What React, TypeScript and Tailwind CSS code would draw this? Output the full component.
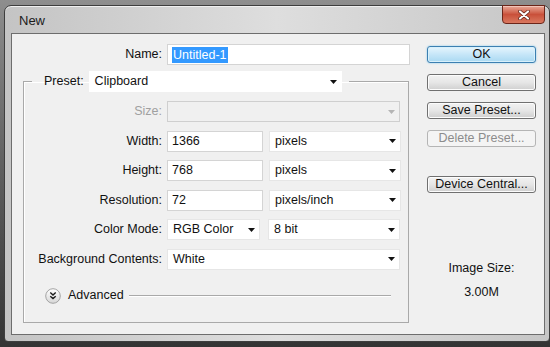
import type { ReactNode } from 'react';

const Arrow = ({ disabled }: { disabled?: boolean }) => (
  <svg width="7" height="4" viewBox="0 0 7 4" className="shrink-0">
    <path d="M0 0h7L3.5 4z" fill={disabled ? '#b4b4b4' : '#111'} />
  </svg>
);

function Select({ value, className, disabled }: { value?: string; className: string; disabled?: boolean }) {
  return (
    <div
      className={`h-[21px] flex items-center justify-between pl-[5px] pr-[4px] border ${
        disabled ? 'bg-[#f0f0f0] border-[#cfcfcf]' : 'bg-white border-[#e6e6e6]'
      } ${className}`}
    >
      <span>{value}</span>
      <Arrow disabled={disabled} />
    </div>
  );
}

function Input({ value, className }: { value: string; className: string }) {
  return (
    <div className={`h-[21px] flex items-center pl-[4px] bg-white border border-[#d4d4d4] ${className}`}>
      {value}
    </div>
  );
}

function Row({ label, children, muted }: { label: string; children: ReactNode; muted?: boolean }) {
  return (
    <div className="h-[21px] flex items-center gap-[5px]">
      <span className={`w-[138px] text-right ${muted ? 'text-[#a0a0a0]' : ''}`}>{label}</span>
      {children}
    </div>
  );
}

function Button({ children, variant }: { children: ReactNode; variant?: 'default' | 'disabled' }) {
  let cls =
    'border-[#707070] bg-gradient-to-b from-[#f2f2f2] via-[#e6e6e6] to-[#cfcfcf] text-[#111] shadow-[inset_0_0_0_1px_#fcfcfc]';
  if (variant === 'default')
    cls =
      'border-[#3c7fb1] bg-gradient-to-b from-[#e6f5fd] via-[#c6e6f8] to-[#a9d9f2] text-[#111] shadow-[inset_0_0_0_1px_#d8f0fb,0_0_2px_#7cc4ea]';
  if (variant === 'disabled') cls = 'border-[#b5b5b5] bg-[#f4f4f4] text-[#8c8c8c]';
  return (
    <div className={`h-[17px] w-[109px] rounded-[3px] border flex items-center justify-center leading-none ${cls}`}>
      {children}
    </div>
  );
}

export default function App() {
  return (
    <div className="w-[550px] h-[347px] overflow-hidden bg-gradient-to-b from-[#8e8e8e] via-[#5e5e5e] to-[#343434] pl-[4px] pt-[5px] font-['Liberation_Sans',Arial,sans-serif] text-[12.5px] text-[#111]">
      <div className="relative w-[546px] h-[337px] rounded-t-[7px] rounded-b-[4px] border border-[#3e3e3e] bg-gradient-to-r from-[#c4c4c4] via-[#dedede] to-[#c6c6c6] pl-[6px] pr-[4px] flex flex-col shadow-[inset_0_1px_0_#f0f0f0]">
        <div className="h-[27px] flex items-center pl-[8px] pt-[2px] text-[13px] text-[#1b1b1b]">New</div>

        <div className="absolute right-[4px] top-[-1px] w-[43px] h-[19px] rounded-b-[4px] border border-[#6b2519] bg-gradient-to-b from-[#e8a898] via-[#c9503a] to-[#d9785f] flex items-center justify-center shadow-[inset_0_1px_0_#f3c4b8]">
          <svg width="14" height="10" viewBox="0 0 14 10">
            <path d="M3 1.5l8 7M11 1.5l-8 7" stroke="#5a1f16" strokeWidth="3.6" strokeLinecap="round" />
            <path d="M3 1.5l8 7M11 1.5l-8 7" stroke="#fff" strokeWidth="2.2" strokeLinecap="round" />
          </svg>
        </div>

        <div className="w-[534px] h-[302px] border border-[#6d6d6d] bg-[#f0f0f0] pl-[11px] pt-[10px] flex gap-[17px]">
          <div className="w-[387px] flex flex-col">
            <div className="h-[21px] flex items-center gap-[5px]">
              <span className="w-[139px] text-right">Name:</span>
              <div className="w-[243px] h-[21px] flex items-center pl-[4px] bg-white border border-[#d4d4d4]">
                <span className="bg-[#3399ff] text-white leading-[16px] px-[1px]">Untitled-1</span>
              </div>
            </div>

            <fieldset className="mt-[6px] w-[386px] border border-[#a9a9a9] shadow-[inset_1px_1px_0_#fff] pb-[18px]">
              <legend className="ml-[8px]">
                <div className="flex items-center pl-[12px] pr-[7px] gap-[5px]">
                  <span>Preset:</span>
                  <Select value="Clipboard" className="w-[253px] border-white" />
                </div>
              </legend>

              <div className="pt-[9px] flex flex-col gap-[8.5px]">
                <Row label="Size:" muted>
                  <Select className="w-[233px]" disabled />
                </Row>
                <Row label="Width:">
                  <Input value="1366" className="w-[96px]" />
                  <Select value="pixels" className="w-[132px] ml-[1px]" />
                </Row>
                <Row label="Height:">
                  <Input value="768" className="w-[96px]" />
                  <Select value="pixels" className="w-[132px] ml-[1px]" />
                </Row>
                <Row label="Resolution:">
                  <Input value="72" className="w-[96px]" />
                  <Select value="pixels/inch" className="w-[132px] ml-[1px]" />
                </Row>
                <Row label="Color Mode:">
                  <Select value="RGB Color" className="w-[93px]" />
                  <Select value="8 bit" className="w-[132px] ml-[3px]" />
                </Row>
                <Row label="Background Contents:">
                  <Select value="White" className="w-[233px]" />
                </Row>
              </div>

              <div className="mt-[18px] h-[16px] flex items-center pl-[21px] pr-[17px]">
                <svg width="16" height="16" viewBox="0 0 16 16" className="shrink-0">
                  <defs>
                    <linearGradient id="adv" x1="0" y1="0" x2="0" y2="1">
                      <stop offset="0" stopColor="#ffffff" />
                      <stop offset="1" stopColor="#d6d6d6" />
                    </linearGradient>
                  </defs>
                  <circle cx="8" cy="8" r="7.3" fill="url(#adv)" stroke="#a3a3a3" />
                  <path d="M5.3 4.6L8 7l2.7-2.4M5.3 8.2L8 10.6l2.7-2.4" fill="none" stroke="#1a1a1a" strokeWidth="1.4" />
                </svg>
                <span className="ml-[7px]">Advanced</span>
                <div className="ml-[5px] flex-1 h-px bg-[#a9a9a9] shadow-[0_1px_0_#fff]" />
              </div>
            </fieldset>
          </div>

          <div className="w-[109px] mt-[2px] flex flex-col">
            <div className="flex flex-col gap-[11px]">
              <Button variant="default">OK</Button>
              <Button>Cancel</Button>
              <Button>Save Preset...</Button>
              <Button variant="disabled">Delete Preset...</Button>
            </div>
            <div className="mt-[29px]">
              <Button>Device Central...</Button>
            </div>
            <div className="mt-[68px] text-center leading-[15px]">Image Size:</div>
            <div className="mt-[9px] text-center leading-[15px]">3.00M</div>
          </div>
        </div>
      </div>
    </div>
  );
}
